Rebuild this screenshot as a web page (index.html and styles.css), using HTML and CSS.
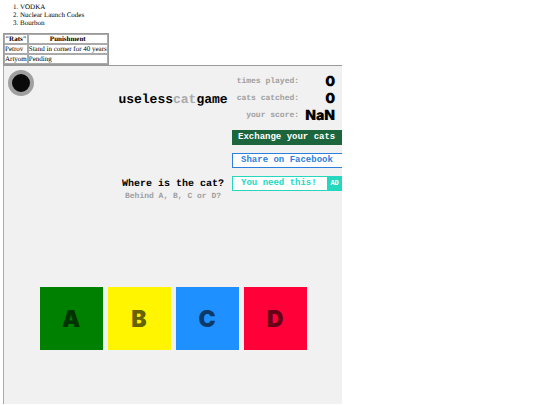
FILE: index.html
```html
<!DOCTYPE html>
<html lang="en">
<head>
  <meta charset="UTF-8">
  <meta name="viewport" content="width=device-width, initial-scale=1.0">
  <title>uselesscatgame</title>
  <link rel="stylesheet" href="styles.css">
</head>
<body>
  <ol class="drinks">
    <li>VODKA</li>
    <li>Nuclear Launch Codes</li>
    <li>Bourbon</li>
  </ol>

  <table class="rats">
    <tr><th>"Rats"</th><th>Punishment</th></tr>
    <tr><td>Petrov</td><td>Stand in corner for 40 years</td></tr>
    <tr><td>Artyom</td><td>Pending</td></tr>
  </table>

  <!-- Game -->
  <main class="game">
    <div class="top">
      <div class="corner">
        <div class="dot"></div>
      </div>

      <div class="middle">
        <h1 class="title">useless<span>cat</span>game</h1>
        <div class="question">
          <h2>Where is the cat?</h2>
          <p>Behind A, B, C or D?</p>
        </div>
      </div>

      <div class="side">
        <dl class="stats">
          <dt>times played:</dt><dd>0</dd>
          <dt>cats catched:</dt><dd>0</dd>
          <dt>your score:</dt><dd>NaN</dd>
        </dl>
        <div class="links">
          <button class="link exchange" type="button">Exchange your cats</button>
          <button class="link share" type="button">Share on Facebook</button>
          <button class="link need" type="button">You need this!<span class="ad">AD</span></button>
        </div>
      </div>
    </div>

    <div class="boxes">
      <button class="box green" type="button">A</button>
      <button class="box yellow" type="button">B</button>
      <button class="box blue" type="button">C</button>
      <button class="box red" type="button">D</button>
    </div>
  </main>
</body>
</html>
```
FILE: styles.css
```css
* {
  box-sizing: border-box;
}

body {
  margin: 3px;
  margin-bottom: 0;
  background-color: #fff;
  color: #000;
  font-family: "Liberation Serif", "Times New Roman", serif;
  font-size: 7px;
  line-height: 8px;
  text-rendering: geometricPrecision;
}

.drinks {
  margin: 0 0 6px;
  padding-left: 17px;
}

/* Table */
.rats {
  border: 1px solid #999;
  border-spacing: 0;
  font-size: 7px;
  line-height: 8px;
}

.rats th,
.rats td {
  padding: 0;
  border: 1px solid #aaa;
}

.rats td {
  text-align: left;
}

/* Game */
.game {
  width: 63.5%;
  padding-bottom: 54px;
  border-top: 1px solid #999;
  border-left: 1px solid #aaa;
  background-color: #f1f1f1;
  font-family: "Liberation Mono", "Courier New", monospace;
  font-weight: bold;
  overflow: hidden;
}

.top {
  display: grid;
  grid-template-columns: 1fr 114px 1fr;
}

.corner {
  padding: 4px;
}

.dot {
  width: 26px;
  height: 26px;
  border: 4px solid #a0a0a0;
  border-radius: 50%;
  background-color: #0a0a0a;
}

.middle {
  padding-top: 26px;
  text-align: center;
  white-space: nowrap;
}

.title {
  margin: 0;
  font-size: 13px;
  line-height: 16px;
}

.title span {
  color: #aaa;
}

.question {
  padding-top: 71px;
}

.question h2 {
  margin: 0;
  font-size: 10px;
  line-height: 12px;
}

.question p {
  display: flex;
  justify-content: center;
  margin: 0;
  color: #a0a0a0;
  font-size: 8px;
  line-height: 12px;
}

/* Stats and links */
.side {
  padding: 7px 0 0 2px;
}

.stats {
  display: grid;
  grid-template-columns: 1fr 36px;
  align-items: center;
  margin: 0;
  padding-right: 7px;
  text-align: right;
  white-space: nowrap;
}

.stats dt {
  color: #a0a0a0;
  font-size: 8px;
}

.stats dd {
  margin: 0;
  font-family: Inter, sans-serif;
  font-size: 14px;
  font-weight: 900;
  line-height: 17px;
}

.links {
  display: grid;
  gap: 8px;
  padding-top: 6px;
}

.link {
  display: flex;
  align-items: center;
  height: 15px;
  padding: 0 0 0 8px;
  border: 1px solid;
  border-right: 0;
  background-color: #fff;
  font-family: inherit;
  font-size: 9px;
  font-weight: bold;
  line-height: 13px;
  white-space: nowrap;
  cursor: pointer;
}

.exchange {
  padding-left: 5px;
  border-color: #1d663d;
  background-color: #1d663d;
  color: #fff;
}

.share {
  border-color: #2d7fdc;
  color: #2d7fdc;
}

.need {
  border-color: #24d8c0;
  color: #24d8c0;
}

.ad {
  width: 15px;
  margin-left: auto;
  background-color: #24d8c0;
  color: #fff;
  font-size: 7px;
  text-align: center;
}

/* Boxes */
.boxes {
  display: flex;
  justify-content: center;
  gap: 5px;
  padding-top: 84px;
}

.box {
  width: 63px;
  height: 63px;
  padding: 0;
  border: 0;
  font-family: Inter, sans-serif;
  font-size: 23px;
  font-weight: 900;
  cursor: pointer;
}

.green {
  background-color: #008000;
  color: #003300;
}

.yellow {
  background-color: #fff500;
  color: #666200;
}

.blue {
  background-color: #1e90ff;
  color: #0c3a66;
}

.red {
  background-color: #ff0039;
  color: #660017;
}
```
